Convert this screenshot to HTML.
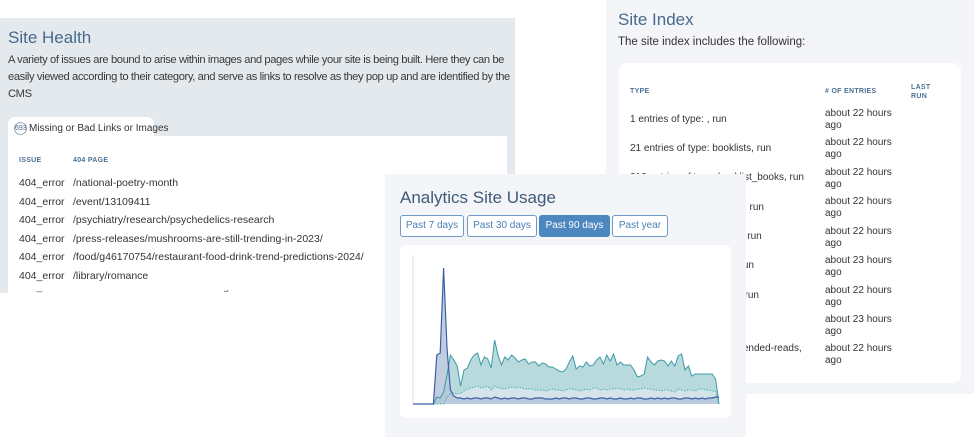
<!DOCTYPE html>
<html><head><meta charset="utf-8">
<style>
*{margin:0;padding:0;box-sizing:border-box}
body{width:974px;height:437px;background:#fff;position:relative;overflow:hidden;font-family:"Liberation Sans",sans-serif;color:#333}
.abs{position:absolute}
.title{color:#46698c;font-size:17px;white-space:nowrap}
#sh{left:0;top:18px;width:515px;height:275px;background:#e4e9ee}
#shp{left:8px;top:52px;width:503px;font-size:11.2px;line-height:17px;color:#3a3a3a;letter-spacing:-0.4px}
#tab{left:8px;top:117px;width:146px;height:22px;background:#fff;border-radius:7px 7px 0 0;font-size:10px;padding:5px 0 0 6px;white-space:nowrap;color:#333}
#tab span{display:inline-block;width:13px;height:13px;border:1px solid #9ab;border-radius:50%;font-size:7px;text-align:center;line-height:11px;vertical-align:middle;color:#46698c;margin-right:2px}
#tbl{left:8px;top:136px;width:499px;height:157px;background:#fff}
.th{font-size:7px;color:#4a6f95;font-weight:bold;letter-spacing:.3px}
.row{font-size:10.5px;color:#333;white-space:nowrap}
#si{left:606px;top:0;width:368px;height:394px;background:#f3f5f9}
#sic{left:619px;top:63px;width:342px;height:320px;background:#fff;border-radius:8px}
.ri{font-size:10px;color:#333;white-space:nowrap;line-height:11.5px}
#an{left:385px;top:174px;width:361px;height:263px;background:#f3f5f9}
.btn{top:215px;height:22px;border:1px solid #6d9ac7;border-radius:3px;background:#fff;color:#4a7fb5;font-size:10px;text-align:center;line-height:20px}
#chart{left:400px;top:245px;width:331px;height:173px;background:#fff;border-radius:6px}
</style></head><body>
<div id="sh" class="abs"></div>
<div class="abs title" style="left:8px;top:28px">Site Health</div>
<div id="shp" class="abs">A variety of issues are bound to arise within images and pages while your site is being built. Here they can be easily viewed according to their category, and serve as links to resolve as they pop up and are identified by the CMS</div>
<div id="tab" class="abs"><span>693</span>Missing or Bad Links or Images</div>
<div id="tbl" class="abs"></div>
<div class="abs th" style="left:19px;top:157px">ISSUE</div>
<div class="abs th" style="left:73px;top:157px">404 PAGE</div>
<div class="abs row" style="left:19px;top:177px">404_error</div><div class="abs row" style="left:73px;top:177px">/national-poetry-month</div>
<div class="abs row" style="left:19px;top:196px">404_error</div><div class="abs row" style="left:73px;top:196px">/event/13109411</div>
<div class="abs row" style="left:19px;top:214px">404_error</div><div class="abs row" style="left:73px;top:214px">/psychiatry/research/psychedelics-research</div>
<div class="abs row" style="left:19px;top:233px">404_error</div><div class="abs row" style="left:73px;top:233px">/press-releases/mushrooms-are-still-trending-in-2023/</div>
<div class="abs row" style="left:19px;top:251px">404_error</div><div class="abs row" style="left:73px;top:251px">/food/g46170754/restaurant-food-drink-trend-predictions-2024/</div>
<div class="abs row" style="left:19px;top:270px">404_error</div><div class="abs row" style="left:73px;top:270px">/library/romance</div>
<div class="abs" style="left:19px;top:290px;width:270px;height:3px;overflow:hidden"><div class="row" style="margin-top:-9px;color:#666">404_error&nbsp;&nbsp;/adult-matches/studies-on-tutoring-services/73048</div></div>

<div id="si" class="abs"></div>
<div class="abs title" style="left:618px;top:10px">Site Index</div>
<div class="abs" style="left:618px;top:36px;font-size:11.5px;color:#333">The site index includes the following:</div>
<div id="sic" class="abs"></div>
<div class="abs th" style="left:630px;top:88px">TYPE</div>
<div class="abs th" style="left:825px;top:88px"># OF ENTRIES</div>
<div class="abs th" style="left:911px;top:84px;line-height:8.5px">LAST<br>RUN</div>
<div class="abs ri" style="left:630px;top:114px">1 entries of type: , run</div>
<div class="abs ri" style="left:630px;top:143px">21 entries of type: booklists, run</div>
<div class="abs ri" style="left:630px;top:172px">212 entries of type: booklist_books, run</div>
<div class="abs ri" style="left:630px;top:202px">45 entries of type: articles, run</div>
<div class="abs ri" style="left:630px;top:231px">12 entries of type: events, run</div>
<div class="abs ri" style="left:630px;top:260px">3 entries of type: pages, run</div>
<div class="abs ri" style="left:630px;top:290px">88 entries of type: books, run</div>
<div class="abs ri" style="left:630px;top:319px">5 entries of type: faqs, run</div>
<div class="abs ri" style="left:630px;top:343px">9 entries of type: recommended-reads,</div>
<div class="abs ri" style="left:825px;top:108px">about 22 hours<br>ago</div>
<div class="abs ri" style="left:825px;top:137px">about 22 hours<br>ago</div>
<div class="abs ri" style="left:825px;top:167px">about 22 hours<br>ago</div>
<div class="abs ri" style="left:825px;top:196px">about 22 hours<br>ago</div>
<div class="abs ri" style="left:825px;top:226px">about 22 hours<br>ago</div>
<div class="abs ri" style="left:825px;top:255px">about 23 hours<br>ago</div>
<div class="abs ri" style="left:825px;top:285px">about 22 hours<br>ago</div>
<div class="abs ri" style="left:825px;top:314px">about 23 hours<br>ago</div>
<div class="abs ri" style="left:825px;top:343px">about 22 hours<br>ago</div>

<div id="an" class="abs"></div>
<div class="abs title" style="left:400px;top:188px;color:#3f5a78">Analytics Site Usage</div>
<div class="abs btn" style="left:400px;width:64px">Past 7 days</div>
<div class="abs btn" style="left:467px;width:70px">Past 30 days</div>
<div class="abs btn" style="left:539px;width:71px;background:#4d87bf;color:#fff;border-color:#4d87bf">Past 90 days</div>
<div class="abs btn" style="left:612px;width:56px">Past year</div>
<div id="chart" class="abs"></div>
<svg class="abs" style="left:0;top:0" width="974" height="437" id="sv"></svg>
<script>
(function(){
var tp=[404,404,404,404,404,404,404,397,398,392,375,355,360,366,386,370,368,360,355,353,365,357,359,368,340,355,365,357,360,355,358,362,360,359,364,362,362,366,363,364,367,367,369,371,372,369,362,356,369,366,367,362,366,365,360,357,364,355,361,354,365,362,365,365,365,370,377,376,374,357,362,365,361,360,361,366,361,366,356,354,370,366,376,374,374,374,374,374,374,379,404];
var md=[404,404,404,404,404,404,404,404,404,404,397,394,393,394,393,391,389,388,387,386,388,387,386,390,386,388,388,389,388,387,388,387,388,389,389,389,390,390,390,391,390,389,390,390,391,390,389,389,390,391,390,389,390,388,388,390,389,390,389,389,388,389,390,389,390,390,389,389,388,389,389,390,390,391,390,390,391,392,389,390,391,390,390,391,389,389,390,390,391,391,404];
var bl=[404,404,404,404,404,404,404,355,353,268,348,390,396,398,398,399,398,399,398,398,399,398,398,399,397,398,399,398,399,398,398,399,398,398,399,399,398,398,398,399,399,399,398,399,398,398,399,398,398,399,399,398,398,399,399,398,398,399,398,399,399,398,399,399,398,399,398,398,399,399,398,399,398,399,398,399,398,398,399,399,398,398,399,398,399,398,399,398,398,397,397];
function pts(a){return a.map(function(v,i){return (413+i*3.4).toFixed(1)+","+v}).join(" ")}
function area(a){return "M413,404 L"+pts(a).replace(/ /g," L")+" L719,404 Z"}
var s='<line x1="413" y1="255" x2="413" y2="404" stroke="#ddd" stroke-width="1"/>';
s+='<path d="'+area(tp)+'" fill="#b9dadd"/>';
s+='<path d="'+area(md)+'" fill="#d5e4ea"/>';
s+='<path d="'+area(bl)+'" fill="#b5c5da" fill-opacity="0.85"/>';
s+='<polyline points="'+pts(tp)+'" fill="none" stroke="#3d9aa6" stroke-width="1"/>';
s+='<polyline points="'+pts(md)+'" fill="none" stroke="#3fb0ae" stroke-width="1" stroke-dasharray="1.5 1.5"/>';
s+='<polyline points="'+pts(bl)+'" fill="none" stroke="#3b5fa8" stroke-width="1.2"/>';
document.getElementById('sv').innerHTML=s;
})();
</script>
</body></html>
